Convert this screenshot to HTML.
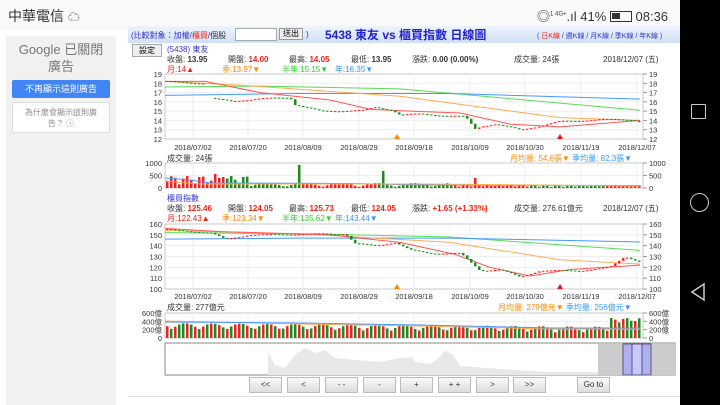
<!DOCTYPE html>
<html><head><meta charset="utf-8"><style>
*{margin:0;padding:0;box-sizing:border-box}
body{width:720px;height:405px;overflow:hidden;background:#fff;font-family:"Liberation Sans","Noto Sans CJK TC",sans-serif;position:relative}
.a{position:absolute;white-space:nowrap}
.s{font-size:8px;color:#333}
.r{color:#e21}.o{color:#f80}.g{color:#3c3}.b{color:#39f}.bl{color:#33c}
.btn{position:absolute;top:377px;width:33px;height:16px;background:linear-gradient(#fafafa,#ddd);border:1px solid #bbb;font-size:8px;text-align:center;line-height:14px;color:#333}
</style></head><body>
<div class="a" style="left:0;top:0;width:680px;height:30px;background:#fafafa"></div>
<div class="a" style="left:8px;top:6px;font-size:14px;color:#333">中華電信 <span style="font-size:12px">☁</span></div>
<div class="a" style="left:537px;top:6px;font-size:13px;color:#333">◎<sup style="font-size:6px">1 4G+</sup>.ıl 41% <span style="display:inline-block;width:22px;height:11px;border:1.5px solid #333;vertical-align:-1px;position:relative"><span style="position:absolute;left:1px;top:1px;width:8px;height:6px;background:#333"></span></span> 08:36</div>
<div class="a" style="left:680px;top:0;width:40px;height:405px;background:#000"></div>
<div class="a" style="left:691px;top:104px;width:15px;height:15px;border:1.5px solid #ccc;border-radius:1px"></div>
<div class="a" style="left:690px;top:193px;width:19px;height:19px;border:1.5px solid #ccc;border-radius:50%"></div>
<svg class="a" style="left:689px;top:282px" width="20" height="20"><path d="M15 2 L3 10 L15 18 Z" fill="none" stroke="#ccc" stroke-width="1.5"/></svg>

<div class="a" style="left:6px;top:36px;width:110px;height:369px;background:#f1f1f1"></div>
<div class="a" style="left:6px;top:41px;width:110px;text-align:center;font-size:13px;color:#777;line-height:17px;white-space:normal">Google 已關閉<br>廣告</div>
<div class="a" style="left:12px;top:80px;width:98px;height:18px;background:#4285f4;border-radius:2px;color:#fff;font-size:9px;text-align:center;line-height:18px">不再顯示這則廣告</div>
<div class="a" style="left:12px;top:102px;width:98px;height:31px;background:#fff;border:1px solid #ddd;border-radius:2px;color:#888;font-size:8px;text-align:center;line-height:11px;padding-top:4px;white-space:normal">為什麼會顯示這則廣<br>告？ ⓘ</div>

<div class="a" style="left:128px;top:26px;width:552px;height:17px;background:linear-gradient(#eef4fc,#cfe0f5)"></div>
<div class="a s" style="left:131px;top:30px;color:#33c">(比較對象：加權/<span class="r">櫃買</span>/<span style="color:#333">個股</span></div>
<div class="a" style="left:235px;top:28px;width:42px;height:13px;background:#fff;border:1px solid #aaa"></div>
<div class="a" style="left:279px;top:28px;width:24px;height:12px;background:#eee;border:1px solid #999;font-size:8px;text-align:center;line-height:10px">送出</div>
<div class="a s" style="left:306px;top:30px;color:#33c">)</div>
<div class="a" style="left:325px;top:26px;font-size:12px;font-weight:bold;color:#22c">5438 東友 vs 櫃買指數 日線圖</div>
<div class="a" style="left:537px;top:31px;font-size:7px;color:#33c">( <span class="r">日K線</span> / 週K線 / 月K線 / 季K線 / 年K線 )</div>

<div class="a" style="left:132px;top:44px;width:30px;height:13px;background:#eee;border:1px solid #aaa;font-size:8px;text-align:center;line-height:11px">設定</div>
<div class="a s bl" style="left:167px;top:44px">(5438) 東友</div>
<div class="a s" style="left:167px;top:54px">收盤: <b>13.95</b></div>
<div class="a s" style="left:228px;top:54px">開盤: <b class="r">14.00</b></div>
<div class="a s" style="left:289px;top:54px">最高: <b class="r">14.05</b></div>
<div class="a s" style="left:351px;top:54px">最低: <b>13.95</b></div>
<div class="a s" style="left:412px;top:54px">漲跌: <b>0.00 (0.00%)</b></div>
<div class="a s" style="left:514px;top:54px">成交量: 24張</div>
<div class="a s" style="left:603px;top:54px">2018/12/07 (五)</div>
<div class="a s r" style="left:167px;top:64px">月:14▲</div>
<div class="a s o" style="left:222px;top:64px">季:13.97▼</div>
<div class="a s g" style="left:282px;top:64px">半年:15.15▼</div>
<div class="a s b" style="left:335px;top:64px">年:16.35▼</div>

<div class="a s" style="left:167px;top:153px">成交量: 24張</div>
<div class="a s o" style="left:510px;top:153px">月均量: 54.6張▼ <span class="b">季均量: 82.3張▼</span></div>

<div class="a s bl" style="left:167px;top:193px">櫃買指數</div>
<div class="a s" style="left:167px;top:203px">收盤: <b class="r">125.46</b></div>
<div class="a s" style="left:228px;top:203px">開盤: <b class="r">124.05</b></div>
<div class="a s" style="left:289px;top:203px">最高: <b class="r">125.73</b></div>
<div class="a s" style="left:351px;top:203px">最低: <b class="r">124.05</b></div>
<div class="a s" style="left:412px;top:203px">漲跌: <b class="r">+1.65 (+1.33%)</b></div>
<div class="a s" style="left:514px;top:203px">成交量: 276.61億元</div>
<div class="a s" style="left:603px;top:203px">2018/12/07 (五)</div>
<div class="a s r" style="left:167px;top:213px">月:122.43▲</div>
<div class="a s o" style="left:222px;top:213px">季:123.34▼</div>
<div class="a s g" style="left:282px;top:213px">半年:135.62▼</div>
<div class="a s b" style="left:335px;top:213px">年:143.44▼</div>
<div class="a s" style="left:167px;top:302px">成交量: 277億元</div>
<div class="a s o" style="left:498px;top:302px">月均量: 279億元▼ <span class="b">季均量: 256億元▼</span></div>

<svg id="sv" class="a" style="left:0;top:0" width="680" height="405" font-family="Liberation Sans" font-size="7.5" fill="#333"></svg>

<div class="btn" style="left:249px">&lt;&lt;</div>
<div class="btn" style="left:287px">&lt;</div>
<div class="btn" style="left:325px">- -</div>
<div class="btn" style="left:363px">-</div>
<div class="btn" style="left:400px">+</div>
<div class="btn" style="left:438px">+ +</div>
<div class="btn" style="left:476px">&gt;</div>
<div class="btn" style="left:513px">&gt;&gt;</div>
<div class="btn" style="left:577px">Go to</div>
<div class="a" style="left:128px;top:396px;width:552px;height:1px;background:#ddd"></div>

<script>
var s='';const X0=165,X1=640;
const dates=['2018/07/02','2018/07/20','2018/08/09','2018/08/29','2018/09/18','2018/10/09','2018/10/30','2018/11/19','2018/12/07'];
const dx=[193,248,303,359,414,470,525,581,637];
function frame(t,b,labels){
 s+=`<rect x="${X0}" y="${t}" width="${X1-X0+3}" height="${b-t}" fill="none" stroke="#bbb" stroke-width="0.8"/>`;
 labels.forEach((v,i)=>{let y=t+(b-t)*i/(labels.length-1);
  if(i>0&&i<labels.length-1)s+=`<line x1="${X0}" x2="${X1+3}" y1="${y}" y2="${y}" stroke="#eee"/>`;
  s+=`<text x="${X0-3}" y="${y+3}" text-anchor="end">${v}</text><text x="${X1+9}" y="${y+3}">${v}</text><line x1="${X1+3}" x2="${X1+7}" y1="${y}" y2="${y}" stroke="#999"/>`;});
 dx.forEach(x=>s+=`<line x1="${x}" x2="${x}" y1="${t}" y2="${b}" stroke="#eee"/>`);
}
function datesAt(y){dx.forEach((x,i)=>s+=`<text x="${x}" y="${y}" text-anchor="middle">${dates[i]}</text>`)}
function interp(k,x){for(let i=1;i<k.length;i++)if(x<=k[i][0]){let a=k[i-1],b=k[i];return a[1]+(b[1]-a[1])*(x-a[0])/(b[0]-a[0])}return k[k.length-1][1]}
function line(k,c,f){s+=`<polyline points="${k.map(p=>p[0]+','+f(p[1])).join(' ')}" fill="none" stroke="${c}" stroke-width="1"/>`}
function candles(k,f,amp,gapFrom,gapTo){let prev=k[0][1],reset=false;
 for(let x=X0+2;x<X1;x+=4){if(gapFrom&&x>gapFrom&&x<gapTo){reset=true;continue;}let v=interp(k,x)+Math.sin(x*1.7)*amp*0.3;
  if(reset){prev=v+0.05;reset=false;}
  let up=v>=prev;let o=prev,c=v;let y1=f(Math.max(o,c)),y2=f(Math.min(o,c));if(y2-y1<1)y2=y1+1;
  s+=`<rect x="${x-1}" y="${y1}" width="2.5" height="${y2-y1}" fill="${up?'#e22':'#282'}"/>`;prev=v;}}
const f1=v=>74+(19-v)*65/7;
frame(74,139,[19,18,17,16,15,14,13,12]);datesAt(150);
line([[165,17.6],[260,17.7],[400,17.4],[640,15.1]],'#5d5',f1);
line([[165,16.7],[300,16.9],[450,16.9],[640,16.3]],'#49f',f1);
line([[165,18.2],[240,17.8],[400,16.6],[560,14.3],[640,14]],'#fa5',f1);
line([[165,18.2],[205,18.2],[260,17],[330,16.2],[370,15.2],[410,15],[460,14.8],[510,13.6],[560,13.3],[640,14]],'#f55',f1);
candles([[165,18.2],[205,18],[208,16.4],[230,16.1],[270,16.4],[290,16.5],[295,15.7],[320,15],[365,15.1],[375,15.4],[392,15.1],[400,14.6],[420,14.7],[465,14.4],[475,13.1],[482,13.4],[495,13.6],[520,13],[540,13.4],[560,13.9],[600,14.1],[630,14.1],[640,13.9]],f1,0.2,205,212);
s+=`<path d="M397 134l-3 5h6z" fill="#f80"/><path d="M560 134l-3 5h6z" fill="#e11"/>`;
frame(163,188,[1000,500,0]);
for(let x=X0+2;x<X1;x+=4){let h=x<250?3+Math.abs(Math.sin(x))*9:x<450?1+Math.abs(Math.sin(x*0.7))*4:1+Math.abs(Math.sin(x*1.3))*2;
 if(x==215)h=14;if(x==299)h=23;if(x==383)h=17;if(x==475)h=10;if(x==223)h=11;
 s+=`<rect x="${x-1}" y="${188-h}" width="2.5" height="${h}" fill="${Math.sin(x*3.1)>0?'#e22':'#282'}"/>`;}
line([[165,178],[190,180],[210,183],[350,183.5],[420,185],[640,185.5]],'#49f',y=>y);
line([[165,181],[200,184],[300,184],[420,184],[640,186]],'#fa5',y=>y);
const f2=v=>224+(160-v)*65/60;
frame(224,289,[160,150,140,130,120,110,100]);datesAt(299);
line([[165,152],[300,151],[450,148],[640,135.6]],'#5d5',f2);
line([[165,146],[300,147],[450,147],[640,143.4]],'#49f',f2);
line([[165,154],[300,151],[450,143],[560,127],[640,123]],'#fa5',f2);
line([[165,156],[220,153],[330,150],[400,143],[455,132],[490,120],[530,112],[570,118],[640,122]],'#f55',f2);
candles([[165,155],[210,152],[225,146],[250,150],[320,151],[345,151],[355,142],[375,140],[395,143],[410,136],[430,133],[460,133],[470,125],[480,117],[500,118],[520,111],[540,117],[580,117],[610,120],[625,130],[640,125]],f2,1.5);
s+=`<path d="M397 284l-3 5h6z" fill="#f80"/><path d="M560 284l-3 5h6z" fill="#e11"/>`;
frame(313,338,['600億','400億','200億','0']);
for(let x=X0+2;x<X1;x+=4){let h=9+Math.abs(Math.sin(x*0.9))*6-(x-165)/120;if(x>610)h=15+Math.abs(Math.sin(x))*5;
 s+=`<rect x="${x-1}" y="${338-h}" width="2.5" height="${h}" fill="${Math.sin(x*2.3)>0?'#e22':'#282'}"/>`;}
line([[165,321],[300,324],[420,326],[550,329],[640,329]],'#fa5',y=>y);
line([[165,322],[300,323],[420,325],[550,328],[640,328]],'#49f',y=>y);
s+=`<rect x="165" y="343" width="510" height="32" fill="#fff" stroke="#888"/>`;
let p='M268 375 L268 352';[[275,365],[285,368],[295,355],[305,348],[315,353],[325,350],[335,358],[355,360],[380,362],[400,358],[412,357],[415,362],[430,364],[440,357],[445,350],[453,355],[460,366],[500,369],[550,372],[598,372]].forEach(q=>p+=` L${q[0]} ${q[1]}`);
s+=`<path d="${p} L598 375 Z" fill="#e8e8e8"/>`;
s+=`<rect x="598" y="344" width="77" height="31" fill="#ccc"/><rect x="623" y="344" width="28" height="31" fill="#b0b0f0" stroke="#557"/><rect x="632" y="344" width="10" height="31" fill="#c8c8ff" stroke="#557"/>`;
document.getElementById('sv').innerHTML=s;
</script>
</body></html>
